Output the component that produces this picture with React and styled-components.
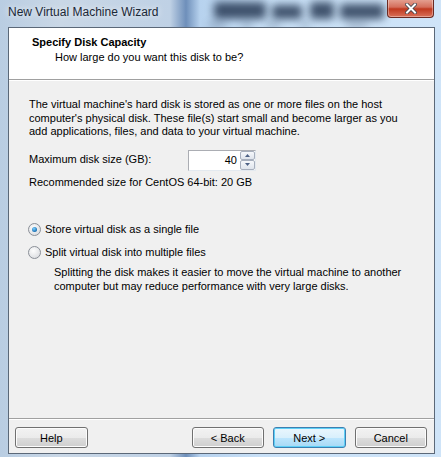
import React from "react";
import styled, { createGlobalStyle } from "styled-components";

const Global = createGlobalStyle`
  html, body { margin: 0; padding: 0; }
  body { font-family: "Liberation Sans", Arial, sans-serif; font-size: 11px; color: #000; }
`;

const Frame = styled.div`
  position: relative;
  width: 441px;
  height: 457px;
  overflow: hidden;
  display: flex;
  flex-direction: column;
  background:
    linear-gradient(90deg, #b9cde2 0px, #c9d7e6 60px, #bfd1e5 170px, #6e8fba 186px, #b7d2ee 200px, #c8e0f7 260px, #cfe4f8 441px);
`;

/* blurred shapes of the window behind the glass */
const Blur = styled.div`
  position: absolute;
  left: ${p => p.$x}px;
  top: ${p => p.$y}px;
  width: ${p => p.$w}px;
  height: ${p => p.$h}px;
  background: #1d2f4a;
  opacity: ${p => p.$o || 0.8};
  filter: blur(4px);
  border-radius: 3px;
  pointer-events: none;
`;

const TitleBar = styled.div`
  position: relative;
  height: 27px;
  display: flex;
  align-items: flex-start;
  justify-content: space-between;
  padding-left: 8px;
  padding-right: 7px;
`;

const Title = styled.div`
  margin-top: 5px;
  font-size: 12px;
  color: #1b2837;
  text-shadow: 0 0 6px rgba(255,255,255,0.9);
`;

const CloseButton = styled.div`
  width: 45px;
  height: 18px;
  margin-top: -1px;
  border: 1px solid #6b2a22;
  border-top: none;
  border-radius: 0 0 4px 4px;
  background: linear-gradient(180deg, #e6a596 0%, #d46e5b 45%, #c0391f 55%, #d9715a 100%);
  box-shadow: inset 0 0 0 1px rgba(255,255,255,0.35);
  display: flex;
  align-items: center;
  justify-content: center;
`;

const Client = styled.div`
  position: relative;
  flex: 1;
  margin: 0 6px 3px 8px;
  border: 1px solid #5b6878;
  background: #f0f0f0;
  display: flex;
  flex-direction: column;
`;

const Header = styled.div`
  height: 52px;
  background: #fff;
  border-bottom: 1px solid #a0a0a0;
  box-shadow: 0 1px 0 #fff;
  padding: 8px 0 0 23px;
  box-sizing: border-box;
`;

const HeaderTitle = styled.div`
  font-weight: bold;
  font-size: 11px;
`;

const HeaderSub = styled.div`
  margin-top: 3px;
  padding-left: 23px;
`;

const Body = styled.div`
  flex: 1;
  padding: 18px 20px 0 20px;
  line-height: 13.5px;
`;

const Row = styled.div`
  display: flex;
  align-items: center;
  margin-top: ${p => p.$mt || 0}px;
`;

const Label = styled.div`
  width: 159px;
`;

const Spin = styled.div`
  display: flex;
  width: 68px;
  height: 21px;
  border: 1px solid #abadb3;
  border-color: #abadb3 #e3e9ef #e3e9ef #abadb3;
  background: #fff;
  box-sizing: border-box;
`;

const SpinValue = styled.div`
  flex: 1;
  text-align: right;
  padding-right: 3px;
  line-height: 19px;
`;

const SpinButtons = styled.div`
  width: 15px;
  display: flex;
  flex-direction: column;
`;

const SpinBtn = styled.div`
  flex: 1;
  border: 1px solid #a7afbd;
  border-radius: 2px;
  background: linear-gradient(180deg, #f6f8fb, #dfe4ec);
  display: flex;
  align-items: center;
  justify-content: center;
`;

const Radio = styled.div`
  width: 11px;
  height: 11px;
  border-radius: 50%;
  border: 1px solid #8a8f97;
  background: radial-gradient(circle at 40% 35%, #fdfdfd, #d4d6da);
  display: flex;
  align-items: center;
  justify-content: center;
  margin-right: 4px;
  margin-left: -1px;
`;

const Dot = styled.div`
  width: 5px;
  height: 5px;
  border-radius: 50%;
  background: radial-gradient(circle at 40% 35%, #7fd1ff, #0b62a8 80%);
`;

const Note = styled.div`
  padding-left: 25px;
  margin-top: 7px;
`;

const Footer = styled.div`
  height: 35px;
  border-top: 1px solid #a0a0a0;
  box-shadow: inset 0 1px 0 #fff;
  display: flex;
  align-items: flex-start;
  padding: 8px 7px 0 6px;
  box-sizing: border-box;
`;

const Button = styled.div`
  width: 73px;
  height: 21px;
  box-sizing: border-box;
  margin-left: ${p => p.$ml || 0}px;
  border: 1px solid ${p => (p.$def ? "#3c7fb1" : "#707070")};
  border-radius: 3px;
  background: ${p =>
    p.$def
      ? "linear-gradient(180deg, #eaf6fd 0%, #d9f0fc 50%, #bee6fd 51%, #a7d9f5 100%)"
      : "linear-gradient(180deg, #f2f2f2 0%, #ebebeb 50%, #dddddd 51%, #cfcfcf 100%)"};
  box-shadow: inset 0 0 0 1px ${p => (p.$def ? "#5ed0f7" : "#fcfcfc")};
  display: flex;
  align-items: center;
  justify-content: center;
`;

const blobs = [
  { x: 214, y: 2, w: 52, h: 17 },
  { x: 272, y: 5, w: 30, h: 14 },
  { x: 310, y: 2, w: 24, h: 17 },
  { x: 340, y: 4, w: 44, h: 15 },
  { x: 208, y: 23, w: 18, h: 4, o: 0.4 },
  { x: 242, y: 23, w: 10, h: 4, o: 0.4 },
  { x: 266, y: 23, w: 14, h: 4, o: 0.4 },
  { x: 300, y: 23, w: 10, h: 4, o: 0.4 },
  { x: 346, y: 23, w: 22, h: 4, o: 0.4 },
];

export default function App() {
  return (
    <>
      <Global />
      <Frame>
        {blobs.map((b, i) => (
          <Blur key={i} $x={b.x} $y={b.y} $w={b.w} $h={b.h} $o={b.o} />
        ))}
        <TitleBar>
          <Title>New Virtual Machine Wizard</Title>
          <CloseButton>
            <svg width="12" height="11" viewBox="0 0 12 11">
              <path d="M2 1.5 L10 9.5 M10 1.5 L2 9.5" stroke="#3b3f48" strokeWidth="3.6" strokeLinecap="square" />
              <path d="M2 1.5 L10 9.5 M10 1.5 L2 9.5" stroke="#fff" strokeWidth="2" strokeLinecap="square" />
            </svg>
          </CloseButton>
        </TitleBar>
        <Client>
          <Header>
            <HeaderTitle>Specify Disk Capacity</HeaderTitle>
            <HeaderSub>How large do you want this disk to be?</HeaderSub>
          </Header>
          <Body>
            <div>
              The virtual machine's hard disk is stored as one or more files on the host
              computer's physical disk. These file(s) start small and become larger as you
              add applications, files, and data to your virtual machine.
            </div>
            <Row $mt={11}>
              <Label>Maximum disk size (GB):</Label>
              <Spin>
                <SpinValue>40</SpinValue>
                <SpinButtons>
                  <SpinBtn>
                    <svg width="5" height="3" viewBox="0 0 5 3"><path d="M0 3 L2.5 0 L5 3Z" fill="#4d6185" /></svg>
                  </SpinBtn>
                  <SpinBtn>
                    <svg width="5" height="3" viewBox="0 0 5 3"><path d="M0 0 L2.5 3 L5 0Z" fill="#4d6185" /></svg>
                  </SpinBtn>
                </SpinButtons>
              </Spin>
            </Row>
            <Row $mt={5}>Recommended size for CentOS 64-bit: 20 GB</Row>
            <Row $mt={34}>
              <Radio><Dot /></Radio>
              Store virtual disk as a single file
            </Row>
            <Row $mt={9}>
              <Radio />
              Split virtual disk into multiple files
            </Row>
            <Note>
              Splitting the disk makes it easier to move the virtual machine to another
              computer but may reduce performance with very large disks.
            </Note>
          </Body>
          <Footer>
            <Button>Help</Button>
            <Button $ml={104}>&lt; Back</Button>
            <Button $ml={9} $def>Next &gt;</Button>
            <Button $ml={9}>Cancel</Button>
          </Footer>
        </Client>
      </Frame>
    </>
  );
}
